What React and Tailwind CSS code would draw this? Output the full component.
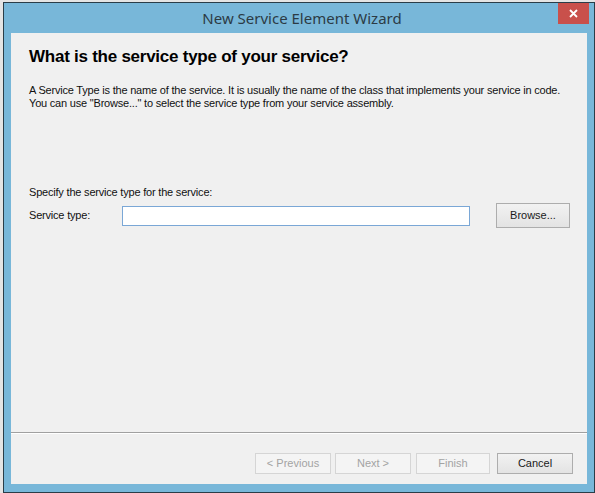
import React from "react"

const font = { fontFamily: '"Liberation Sans", Arial, sans-serif' }

const WizButton = ({ label, disabled, className = "" }) => (
  <button
    disabled={disabled}
    className={`h-[21px] border text-[11px] leading-none ${
      disabled
        ? "border-[#d5d5d5] bg-[#f4f4f4] text-[#a3a3a3]"
        : "border-[#adadad] bg-gradient-to-b from-[#f2f2f2] to-[#e3e3e3] text-[#1a1a1a]"
    } ${className}`}
  >
    {label}
  </button>
)

const App = () => {
  return (
    <div className="w-[595px] h-[493px] bg-[#e4e4e4] pl-[3px] pt-[2px]" style={font}>
      <div className="w-[592px] h-[491px] border border-[#2a3d48] bg-[#78b7d9] flex flex-col">
        {/* Title bar */}
        <div className="relative h-[30px] shrink-0 flex items-center justify-center">
          <span
            className="text-[15px] text-[#2c3b45] pl-[6px]"
            style={{ fontFamily: '"Noto Sans", "Open Sans", sans-serif' }}
          >
            New Service Element Wizard
          </span>
          <div className="absolute right-[5px] top-0 w-[31px] h-[21px] bg-[#c9504b] flex items-center justify-center">
            <svg width="9" height="9" viewBox="0 0 9 9">
              <path d="M1 1 L8 8 M8 1 L1 8" stroke="#fff" strokeWidth="1.8" />
            </svg>
          </div>
        </div>

        {/* Client area */}
        <div className="ml-[7px] mr-[7px] h-[451px] bg-[#f0f0f0] flex flex-col">
          <div className="flex-1 pl-[18px] pr-[16px]">
            <h1 className="mt-[13px] text-[17px] tracking-[-0.25px] font-bold text-black leading-[22px] whitespace-nowrap">
              What is the service type of your service?
            </h1>
            <p className="mt-[16px] text-[11px] tracking-[-0.2px] leading-[13px] text-[#111] whitespace-nowrap">
              A Service Type is the name of the service. It is usually the name of the class that implements your service in code.
              <br />
              You can use "Browse..." to select the service type from your service assembly.
            </p>

            <p className="mt-[76px] text-[11px] tracking-[-0.2px] leading-[13px] text-[#111]">
              Specify the service type for the service:
            </p>
            <div className="mt-[4px] flex items-center">
              <span className="w-[93px] text-[11px] tracking-[-0.2px] text-[#111]">Service type:</span>
              <div className="w-[348px] h-[20px] border border-[#7aa7d6] bg-white" />
              <button className="ml-[26px] w-[74px] h-[25px] border border-[#adadad] bg-gradient-to-b from-[#f2f2f2] to-[#e3e3e3] text-[11px] text-[#1a1a1a]">
                Browse...
              </button>
            </div>
          </div>

          {/* Footer */}
          <div className="h-[52px] shrink-0 border-t border-[#a0a0a0]">
            <div className="h-full border-t border-white flex items-start justify-end pt-[19px] pr-[14px]">
              <WizButton label="< Previous" disabled className="w-[76px]" />
              <WizButton label="Next >" disabled className="ml-[4px] w-[76px]" />
              <WizButton label="Finish" disabled className="ml-[5px] w-[74px]" />
              <WizButton label="Cancel" className="ml-[7px] w-[76px]" />
            </div>
          </div>
        </div>
      </div>
    </div>
  )
}

export default App
